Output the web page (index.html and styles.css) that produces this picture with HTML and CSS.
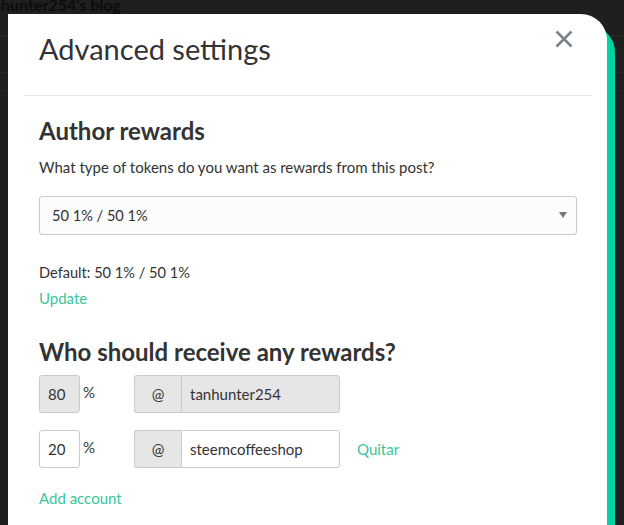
FILE: index.html
```html
<!DOCTYPE html>
<html lang="en">
<head>
<meta charset="utf-8">
<title>Advanced settings</title>
<link rel="stylesheet" href="styles.css">
</head>
<body>
<div class="page">
  <div class="page-title">tanhunter254's blog</div>
  <div class="page-rule r1"></div>
  <div class="page-rule r2"></div>
  <div class="page-rule r3"></div>
</div>

<div class="modal">
  <div class="modal-header">
    <h2 class="modal-title">Advanced settings</h2>
    <button class="close" aria-label="Close">
      <svg width="18" height="18" viewBox="0 0 18 18"><path d="M1.5 1.5 L16.5 16.5 M16.5 1.5 L1.5 16.5" stroke="#7a848b" stroke-width="2.6" fill="none"/></svg>
    </button>
  </div>
  <div class="divider"></div>
  <div class="modal-body">
    <h3 class="section-title">Author rewards</h3>
    <p class="question">What type of tokens do you want as rewards from this post?</p>
    <div class="select">
      <span>50 1% / 50 1%</span>
      <span class="caret"></span>
    </div>
    <p class="default">Default: 50 1% / 50 1%</p>
    <a class="link update">Update</a>

    <h3 class="section-title who">Who should receive any rewards?</h3>
    <div class="beneficiary">
      <div class="pct">
        <span class="input num disabled">80</span>
        <span class="pct-sign">%</span>
      </div>
      <div class="group">
        <span class="addon">@</span>
        <span class="input name disabled">tanhunter254</span>
      </div>
    </div>
    <div class="beneficiary second">
      <div class="pct">
        <span class="input num">20</span>
        <span class="pct-sign">%</span>
      </div>
      <div class="group">
        <span class="addon">@</span>
        <span class="input name">steemcoffeeshop</span>
      </div>
      <a class="link quitar">Quitar</a>
    </div>
    <a class="link add">Add account</a>
  </div>
</div>
</body>
</html>
```
FILE: styles.css
```css
* { box-sizing: border-box; }
html, body {
  margin: 0;
  padding: 0;
  height: 100%;
  overflow: hidden;
}
body {
  background: #1f1f1f;
  font-family: "Lato", "Liberation Sans", sans-serif;
  color: #333;
}
.page { height: 100%; overflow: hidden; }
.page-title {
  margin: -5px 0 0 -22px;
  font-weight: 700;
  font-size: 16px;
  line-height: 20px;
  color: #0c0c0c;
}
.page-rule { height: 1px; background: #272727; }
.r1 { margin-top: 20px; }
.r2 { margin-top: 36px; }
.r3 { margin-top: 17px; }

.modal {
  position: absolute;
  left: 8px;
  top: 14px;
  width: 599px;
  height: 511px;
  background: #fff;
  border-top-right-radius: 26px;
  box-shadow: 8px 12px 0 #03d2a2;
}
.modal-header {
  display: flex;
  justify-content: space-between;
  align-items: flex-start;
  padding: 17px 31px 28px 31px;
}
.modal-title {
  margin: 0;
  font-size: 29px;
  line-height: 36px;
  font-weight: 400;
  color: #333;
}
.close {
  margin: -1px 3px 0 0;
  padding: 0;
  border: 0;
  background: none;
  width: 18px;
  height: 18px;
  display: block;
}
.close svg { display: block; }
.divider {
  margin: 0 15px 0 16px;
  border-top: 1px solid #e8e8e8;
}
.modal-body {
  padding: 0 31px;
  display: flex;
  flex-direction: column;
  align-items: flex-start;
}
.section-title {
  margin: 19px 0 0;
  font-size: 24px;
  line-height: 32px;
  font-weight: 700;
  color: #333;
}
.question {
  margin: 8px 0 0;
  font-size: 15px;
  line-height: 24px;
}
.select {
  margin-top: 17px;
  width: 538px;
  height: 39px;
  border: 1px solid #cacaca;
  border-radius: 3px;
  background: #fcfcfc;
  display: flex;
  align-items: center;
  justify-content: space-between;
  padding: 0 9px 0 12px;
  font-size: 14.6px;
}
.caret {
  width: 0;
  height: 0;
  border-left: 4px solid transparent;
  border-right: 4px solid transparent;
  border-top: 6px solid #777;
  margin-top: -2px;
}
.default {
  margin: 26px 0 0;
  font-size: 14.6px;
  line-height: 24px;
}
.link {
  color: #3ac699;
  font-size: 15px;
  line-height: 24px;
  cursor: pointer;
}
.update { margin-top: 1px; }
.who { margin-top: 26px; }
.beneficiary {
  margin-top: 7px;
  display: flex;
  align-items: center;
}
.beneficiary.second { margin-top: 17px; }
.pct {
  width: 95px;
  display: flex;
  align-items: flex-start;
}
.input {
  height: 38px;
  border: 1px solid #cacaca;
  background: #fff;
  display: flex;
  align-items: center;
  padding: 0 8px;
  font-size: 15px;
  color: #333;
}
.input.disabled { background: #e6e6e6; }
.num {
  width: 41px;
  border-radius: 3px;
}
.pct-sign {
  margin: 9px 0 0 3px;
  font-size: 15px;
  line-height: 16px;
}
.group { display: flex; }
.addon {
  width: 47px;
  height: 38px;
  border: 1px solid #cacaca;
  border-right: 0;
  border-radius: 3px 0 0 3px;
  background: #e6e6e6;
  display: flex;
  align-items: center;
  justify-content: center;
  font-size: 15px;
}
.name {
  width: 159px;
  border-radius: 0 3px 3px 0;
}
.quitar { margin-left: 17px; }
.add { margin-top: 18px; }
```
